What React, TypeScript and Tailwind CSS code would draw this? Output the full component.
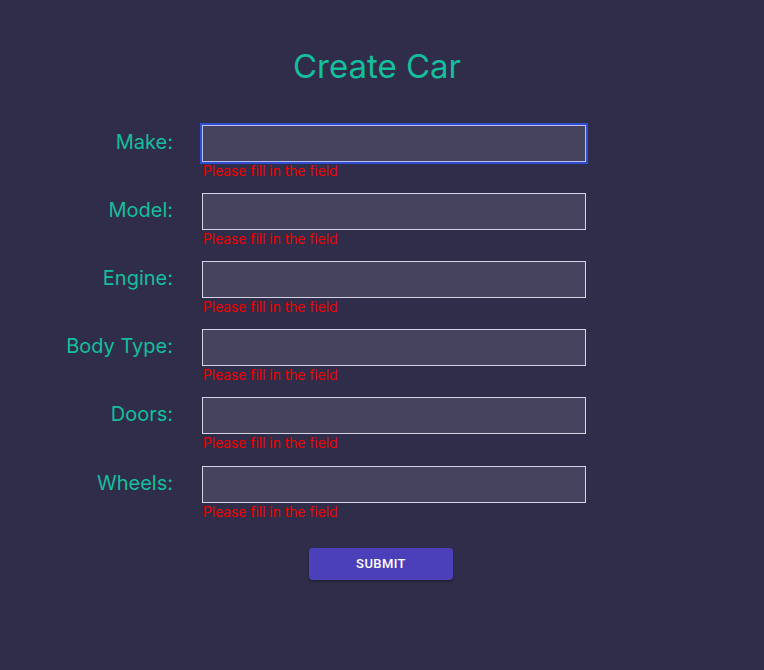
import React from "react";

const fields = ["Make", "Model", "Engine", "Body Type", "Doors", "Wheels"];

export default function App() {
  return (
    <div
      className="min-h-[670px] w-full bg-[#302d4a]"
      style={{ fontFamily: "Inter, 'Noto Sans', sans-serif" }}
    >
      <div className="flex flex-col items-center pt-[44px]">
        <h1 className="text-[33px] leading-[44px] text-[#13bf9c] ml-[-10px]">Create Car</h1>
      </div>
      <form className="flex flex-col pt-[37px]" onSubmit={(e) => e.preventDefault()}>
        {fields.map((f, i) => (
          <div key={f} className={i === 5 ? "flex flex-col mb-[13px] mt-[1px]" : "flex flex-col mb-[13px]"}>
            <div className="flex items-center">
              <label className="w-[173px] text-right text-[20px] leading-[24px] text-[#13bf9c] pb-[4px]">
                {f}:
              </label>
              <div className="ml-[29px] w-[384px] h-[37px]">
                <input
                  className={
                    i === 0
                      ? "w-full h-full bg-[#45435e] border border-[#b8bff0] outline-2 outline-[#2f4fd0] text-white px-2"
                      : "w-full h-full bg-[#45435e] border border-[#d4d4e4] outline-none text-white px-2"
                  }
                />
              </div>
            </div>
            <div className="ml-[203px] text-[13.8px] leading-[18px] text-[#ee0000]">
              Please fill in the field
            </div>
          </div>
        ))}
        <div className="flex justify-center pt-[14px] pr-[2px]">
          <button
            type="submit"
            className="w-[144px] h-[32px] rounded-[4px] bg-[#4c3fba] text-white text-[13px] font-medium tracking-[0.4px] shadow-[0_2px_3px_rgba(0,0,0,0.3)]"
            style={{ fontFamily: "Roboto, sans-serif" }}
          >
            SUBMIT
          </button>
        </div>
      </form>
    </div>
  );
}
